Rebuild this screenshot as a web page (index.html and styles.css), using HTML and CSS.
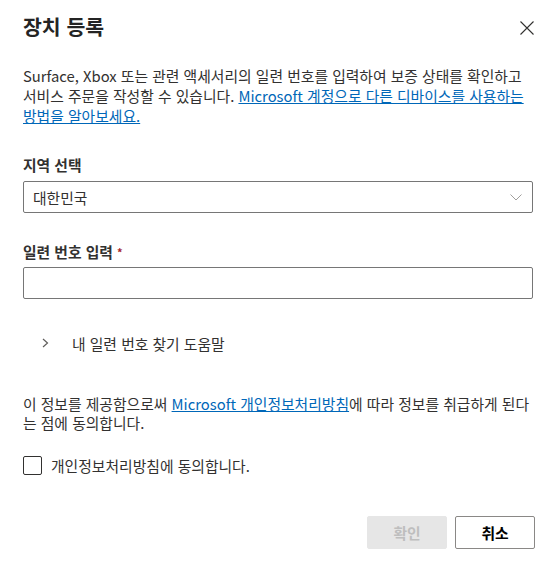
FILE: index.html
```html
<!DOCTYPE html>
<html lang="ko">
<head>
<meta charset="utf-8">
<title>장치 등록</title>
<link rel="stylesheet" href="styles.css">
</head>
<body>
<div class="dialog">
  <div class="header">
    <h1 class="title">장치 등록</h1>
    <button class="close" aria-label="닫기">
      <svg width="14" height="14" viewBox="0 0 14 14"><path d="M0.5 0.5 L13.5 13.5 M13.5 0.5 L0.5 13.5" stroke="#323130" stroke-width="1.1" fill="none"/></svg>
    </button>
  </div>
  <p class="intro">Surface, Xbox 또는 관련 액세서리의 일련 번호를 입력하여 보증 상태를 확인하고<br>서비스 주문을 작성할 수 있습니다. <a href="#" class="link">Microsoft 계정으로 다른 디바이스를 사용하는<br>방법을 알아보세요.</a></p>

  <div class="label">지역 선택</div>
  <div class="select">
    <span>대한민국</span>
    <svg width="12" height="7" viewBox="0 0 12 7"><path d="M0.5 0.5 L6 6 L11.5 0.5" stroke="#a19f9d" stroke-width="1" fill="none"/></svg>
  </div>

  <div class="label">일련 번호 입력 <span class="req">*</span></div>
  <div class="input"></div>

  <div class="help">
    <svg class="help-chev" width="7" height="10" viewBox="0 0 7 10"><path d="M1 1 L5.5 5 L1 9" stroke="#605e5c" stroke-width="1.2" fill="none"/></svg>
    <span>내 일련 번호 찾기 도움말</span>
  </div>

  <p class="privacy">이 정보를 제공함으로써 <a href="#" class="link">Microsoft 개인정보처리방침</a>에 따라 정보를 취급하게 된다<br>는 점에 동의합니다.</p>

  <label class="check">
    <span class="box"></span>
    <span>개인정보처리방침에 동의합니다.</span>
  </label>

  <div class="actions">
    <button class="btn btn-primary" disabled>확인</button>
    <button class="btn btn-secondary">취소</button>
  </div>
</div>
</body>
</html>
```
FILE: styles.css
```css
* { box-sizing: border-box; }
html, body { margin: 0; padding: 0; background: #fff; }
body {
  font-family: "Segoe UI", "Noto Sans CJK KR", sans-serif;
  font-size: 14.8px;
  color: #323130;
}
.dialog {
  width: 556px;
  padding: 12px 21px 0 23px;
}
.header {
  display: flex;
  justify-content: space-between;
  align-items: center;
  height: 28px;
}
.title {
  margin: 0;
  font-size: 20.5px;
  font-weight: 700;
  line-height: 28px;
  color: #242424;
}
.close {
  border: 0;
  background: none;
  padding: 0;
  width: 14px;
  height: 14px;
  display: flex;
  margin: 4px 1px 0 0;
}
.intro {
  margin: 26px 0 0 0;
  line-height: 20px;
  white-space: nowrap;
}
.link {
  color: #0067b8;
  text-decoration: underline;
}
.label {
  margin-top: 29px;
  line-height: 20px;
  font-weight: 600;
}
.req { color: #a4262c; font-size: 11px; vertical-align: top; }
.select {
  margin-top: 6px;
  margin-right: 2px;
  height: 32px;
  border: 1px solid #767676;
  border-radius: 2px;
  display: flex;
  align-items: center;
  justify-content: space-between;
  padding: 0 10px 0 9px;
}
.input {
  margin-top: 5px;
  margin-right: 2px;
  height: 32px;
  border: 1px solid #767676;
  border-radius: 2px;
}
.help {
  margin-top: 34px;
  height: 20px;
  display: flex;
  align-items: center;
  padding-left: 19px;
}
.help-chev { margin-right: 23px; }
.privacy {
  margin: 41px 0 0 0;
  line-height: 19px;
  white-space: nowrap;
}
.check {
  margin-top: 23px;
  height: 20px;
  display: flex;
  align-items: center;
  gap: 9px;
}
.box {
  width: 19px;
  height: 19px;
  border: 1px solid #323130;
  border-radius: 2px;
}
.actions {
  margin-top: 41px;
  display: flex;
  justify-content: flex-end;
  gap: 8px;
}
.btn {
  width: 80px;
  height: 33px;
  border-radius: 2px;
  font-family: inherit;
  font-size: 14.8px;
  font-weight: 600;
  padding: 0;
}
.btn-primary {
  background: #e6e6e6;
  border: 1px solid #e6e6e6;
  color: #bebebe;
}
.btn-secondary {
  background: #fff;
  border: 1px solid #8a8886;
  color: #000;
}
```
